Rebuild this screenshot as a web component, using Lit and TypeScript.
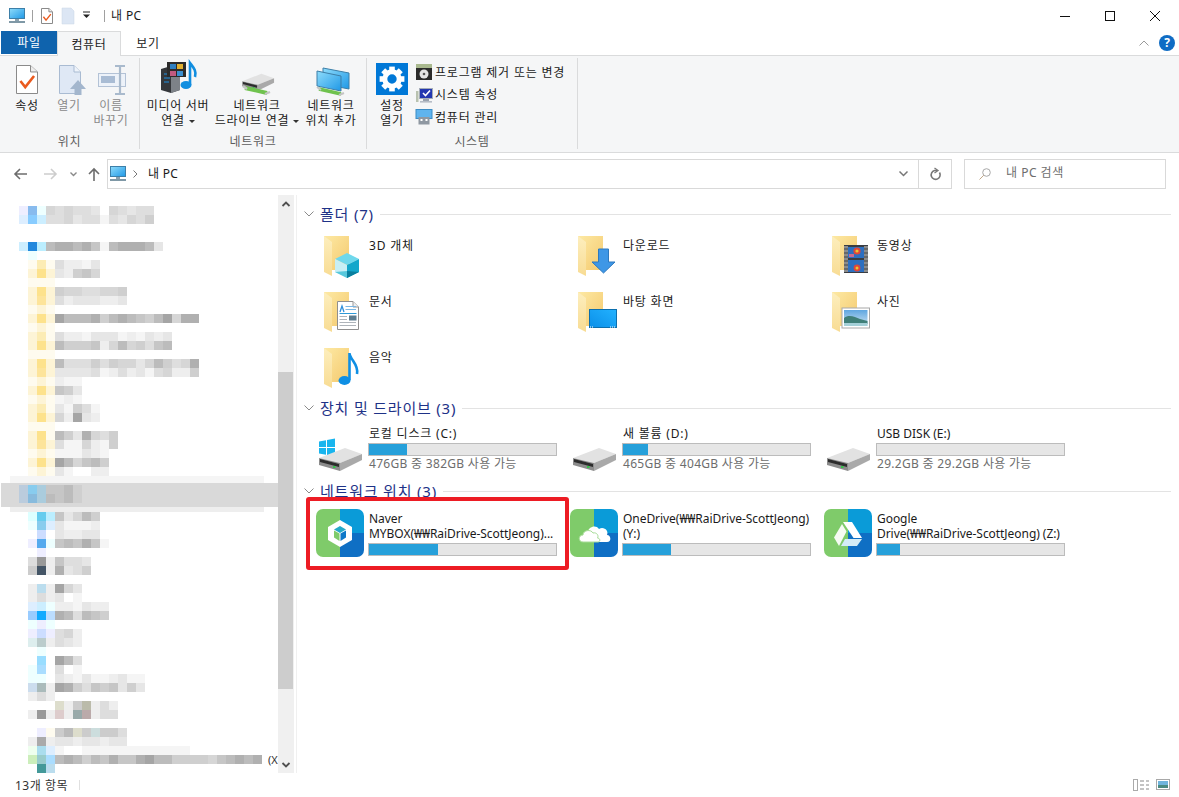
import { LitElement, html, css, svg } from 'lit';
import { customElement } from 'lit/decorators.js';

const ico = (w: number, h: number, body: unknown) => html`
  <svg class="ico" width=${w} height=${h} viewBox="0 0 ${w} ${h}">${body}</svg>
`;

// small shared shapes
const folder = svg`
  <defs>
    <linearGradient id="fb" x1="0" y1="0" x2="1" y2="1"><stop offset="0" stop-color="#fde9a4"/><stop offset="1" stop-color="#f4c96e"/></linearGradient>
    <linearGradient id="ff" x1="0" y1="0" x2="0" y2="1"><stop offset="0" stop-color="#fdeebd"/><stop offset="1" stop-color="#f8dc94"/></linearGradient>
  </defs>
  <polygon points="8,0 33,0 33,34 16,34 8,20" fill="url(#fb)"/>
  <polygon points="8,0 16,6 16,40 8,36" fill="url(#ff)"/>
`;

const hdd = svg`
  <polygon points="3,34 29,24 46,30 24,39" fill="#e2e2e2"/>
  <polygon points="24,39 46,30 46,36 24,47" fill="#a9a9a9"/>
  <polygon points="3,34 24,39 24,47 3,41" fill="#8c8c8c"/>
  <polygon points="4,35 23,40 23,43 4,38" fill="#2c2c2c"/>
  <rect x="17" y="42" width="2.5" height="2" fill="#35c24a"/>
`;

const screenTile = (x: number, y: number, w: number, h: number) => svg`
  <rect x=${x} y=${y} width=${w} height=${h} fill="url(#scr)" stroke="#3d7fa8" stroke-width="1"/>
`;
const scrDefs = svg`
  <defs><linearGradient id="scr" x1="0" y1="0" x2="1" y2="1"><stop offset="0" stop-color="#8fdcfb"/><stop offset="1" stop-color="#1f98e6"/></linearGradient></defs>
`;

const computer = ico(18, 16, svg`
  ${scrDefs}
  ${screenTile(1.5, 0.5, 15, 10)}
  <rect x="7" y="11" width="4" height="2" fill="#8aa0ad"/>
  <rect x="1" y="13" width="16" height="2" fill="#7f98a6"/>
`);

const pageCheck = (w: number, h: number, sw: number) => ico(w, h, svg`
  <path d="M.5 .5H${w * 0.66}L${w - 0.5} ${h * 0.24}V${h - 0.5}H.5Z" fill="#fff" stroke="#8a8a8a"/>
  <path d="M${w * 0.66} .5V${h * 0.24}H${w - 0.5}" fill="#eee" stroke="#8a8a8a"/>
  <path d="M${w * 0.2} ${h * 0.55}L${w * 0.42} ${h * 0.76}L${w * 0.82} ${h * 0.38}" fill="none" stroke="#ea5a1e" stroke-width=${sw}/>
`);

const openIcon = ico(32, 32, svg`
  <g transform="translate(4,0)">
    <path d="M2.5 1.5H17L23.5 8V29.5H2.5Z" fill="#dfe8f5" stroke="#a9bbd2"/>
    <path d="M17 1.5V8H23.5" fill="#eef3fa" stroke="#a9bbd2"/>
    <path d="M21 16L29 25H24.5V31H17.5V25H13Z" fill="#a3b6cd"/>
  </g>
`);

const renameIcon = ico(32, 32, svg`
  <rect x="3.5" y="9.5" width="27" height="13" fill="#edf2f9" stroke="#b3c2d6"/>
  <rect x="6" y="12" width="14" height="7" fill="#a9bcd4"/>
  <path d="M20 2H30M20 30H30M25 2V30" fill="none" stroke="#a9bacd" stroke-width="2.2"/>
`);

const greenBar = svg`
  <path d="M8 24L30 29" stroke="#6fc24e" stroke-width="4"/>
  <path d="M6 22L10 25M28 30L33 28" stroke="#c4c4c4" stroke-width="2.4"/>
`;

const mediaIcon = ico(40, 32, svg`
  <polygon points="3,5 13,2 22,5 22,26 13,29 3,26" fill="#34373b"/>
  <polygon points="13,5 22,5 22,26 13,29" fill="#7d8288"/>
  <path d="M6 10H12M6 14H12M6 18H11" stroke="#1f8fe0" stroke-width="1.2"/>
  <rect x="9" y="-2" width="19" height="15" fill="#2b2b2b"/>
  <rect x="12" y="0" width="6" height="5" fill="#2f7fc0"/>
  <rect x="19" y="0" width="6" height="5" fill="#e0b030"/>
  <rect x="12" y="7" width="6" height="5" fill="#c05a80"/>
  <rect x="19" y="7" width="6" height="5" fill="#3a8fd0"/>
  <ellipse cx="28" cy="21" rx="5.5" ry="4" fill="#118ee0"/>
  <path d="M32 21V-1C35 3 39 7 37 13" fill="none" stroke="#118ee0" stroke-width="2.6"/>
`);

const driveIcon = ico(40, 32, svg`
  <g transform="translate(3,-8) scale(.74)">${hdd}</g>
  ${greenBar}
`);

const netIcon = ico(40, 32, svg`
  ${scrDefs}
  <polygon points="12,4 38,9 38,25 12,20" fill="url(#scr)" stroke="#3d7fa8"/>
  <polygon points="6,7 30,12 30,27 6,22" fill="url(#scr)" stroke="#3d7fa8"/>
  <path d="M8 25L30 30" stroke="#6fc24e" stroke-width="3.5"/>
  <path d="M6 23L10 26M28 31L33 29" stroke="#c4c4c4" stroke-width="2"/>
`);

const gearIcon = ico(32, 32, svg`
  <rect width="32" height="32" fill="#0078d7"/>
  <circle cx="16" cy="16" r="7.2" fill="none" stroke="#fff" stroke-width="5"/>
  ${[0, 45, 90, 135, 180, 225, 270, 315].map(a => svg`
    <rect x="13.2" y="3.6" width="5.6" height="5" fill="#fff" transform="rotate(${a} 16 16)"/>
  `)}
`);

const discIcon = ico(18, 18, svg`
  <rect x="1" y="1" width="16" height="5" fill="#a9b98f"/>
  <rect x="1" y="5" width="16" height="12" fill="#2b2b2b"/>
  <circle cx="9" cy="11" r="4.5" fill="#e4e4e4"/>
  <circle cx="9" cy="11" r="1.3" fill="#555"/>
`);

const sysIcon = ico(18, 18, svg`
  <rect x="1" y="5" width="2.5" height="11" fill="#b9c2b0"/>
  <rect x="4.5" y="2.5" width="13" height="10" fill="#2338b0" stroke="#a4acb8"/>
  <path d="M8 7L10.5 9.5L15 4.5" fill="none" stroke="#fff" stroke-width="1.6"/>
  <rect x="8" y="13" width="6" height="2" fill="#9aa2ae"/>
  <rect x="5" y="15" width="12" height="1.6" fill="#b6bcc6"/>
`);

const mgmtIcon = ico(18, 18, svg`
  <rect x="1" y="1.5" width="16" height="9" fill="#5fb4ee" stroke="#3d8cc4"/>
  <rect x="3.5" y="9" width="11" height="7.5" fill="#8f98a2"/>
  <rect x="5.5" y="11" width="2" height="2" fill="#fff"/>
  <rect x="10.5" y="11" width="2" height="2" fill="#fff"/>
`);

const cube = svg`
  <polygon points="31,17 43,23 31,29 19,23" fill="#6fd8ec"/>
  <polygon points="19,23 31,29 31,42 19,36" fill="#c8eff5"/>
  <polygon points="31,29 43,23 43,36 31,42" fill="#14a7cb"/>
  <polygon points="31,35 43,36 31,42" fill="#0a7f9e"/>
  <polygon points="19,36 31,35 31,42" fill="#58c8dc"/>
`;
const downArrow = svg`
  <path d="M28.5 13H38.5V26H45L33.5 37L22 26H28.5Z" fill="#3e97e6" stroke="#2d79bf"/>
`;
const desktopTile = svg`
  <defs><linearGradient id="dt" x1="0" y1="1" x2="1" y2="0"><stop offset="0" stop-color="#0b8fe8"/><stop offset="1" stop-color="#22b2ff"/></linearGradient></defs>
  <rect x="19.5" y="17.5" width="27" height="18" fill="url(#dt)" stroke="#0b6fae"/>
  <path d="M20 35H23M40 35H46" stroke="#fff" stroke-dasharray="1 1"/>
`;
const docPage = svg`
  <path d="M21.5 9.5H37L42.5 15V37.5H21.5Z" fill="#fff" stroke="#8f8f8f"/>
  <path d="M37 9.5V15H42.5" fill="#eee" stroke="#9a9a9a"/>
  <path d="M24 20L26 14L28 20" fill="none" stroke="#2e8fdc" stroke-width="1.3"/>
  <path d="M29.5 14.5H40M29.5 17.5H40" stroke="#79b6e4"/>
  <path d="M23.5 21.5H40.5" stroke="#2e9ad8"/>
  <path d="M23.5 24.5H31M23.5 27.5H31M23.5 30.5H40M23.5 33.5H40" stroke="#aeb4ba"/>
  <rect x="33" y="23.5" width="7.5" height="5" fill="#5d7c8f"/>
`;
const noteIcon = svg`
  <ellipse cx="28.5" cy="32.5" rx="6" ry="4.4" fill="#0f8fe4"/>
  <path d="M33.5 32V5C34 12 43 16 41 26" fill="none" stroke="#0f8fe4" stroke-width="2.6"/>
`;
const filmStrip = svg`
  <rect x="20" y="9" width="24" height="28" fill="#3a3d42"/>
  <rect x="20" y="10" width="4" height="26" fill="#8c8c8c"/>
  <rect x="40" y="10" width="4" height="26" fill="#8c8c8c"/>
  <path d="M20 13H24M20 17H24M20 21H24M20 25H24M20 29H24M20 33H24M40 13H44M40 17H44M40 21H44M40 25H44M40 29H44M40 33H44" stroke="#444" stroke-width="1"/>
  <rect x="24" y="11" width="16" height="11" fill="#2d6fc0"/>
  <rect x="24" y="24" width="16" height="12" fill="#2d6fc0"/>
  <circle cx="33" cy="15" r="3.6" fill="#e0463a"/>
  <circle cx="33" cy="15" r="1.6" fill="#eac630"/>
  <circle cx="33" cy="32" r="3.4" fill="#e0463a"/>
  <circle cx="33" cy="32" r="1.5" fill="#eac630"/>
  <rect x="25" y="18" width="5" height="3" fill="#c86a92"/>
`;
const photoTile = svg`
  <defs><linearGradient id="sky" x1="0" y1="0" x2="0" y2="1"><stop offset="0" stop-color="#5fa6e0"/><stop offset="1" stop-color="#cfe4f2"/></linearGradient></defs>
  <rect x="18" y="16" width="27.5" height="20" fill="#fff" stroke="#a8a8a8"/>
  <rect x="20" y="18" width="23.5" height="16" fill="url(#sky)"/>
  <path d="M20 26C25 22 31 25 36 27L43.5 29V32H20Z" fill="#3f7f78"/>
  <rect x="20" y="31" width="23.5" height="3" fill="#a4d0d8"/>
`;

const tile = (logo: unknown) => ico(48, 48, svg`
  <defs><clipPath id="tc"><rect width="48" height="48" rx="7"/></clipPath></defs>
  <g clip-path="url(#tc)">
    <rect width="24" height="48" fill="#7fcb6a"/>
    <rect x="24" width="24" height="24" fill="#0a9bd8"/>
    <rect x="24" y="24" width="24" height="24" fill="#0f6fc4"/>
  </g>
  ${logo}
`);

const naverLogo = svg`
  <polygon points="24,11 36,18 36,31 24,38 12,31 12,18" fill="#fff"/>
  <polygon points="24,17 30,20.5 24,24 18,20.5" fill="#25a9c8"/>
  <polygon points="18,21.5 23.5,24.5 23.5,32 18,28.5" fill="#7fcb6a"/>
  <polygon points="30,21.5 24.5,24.5 24.5,32 30,28.5" fill="#0f78c8"/>
`;
const cloudLogo = svg`
  <path d="M18 23C18 18 26 15 29 20C34 17 39 22 37 26C41 26 42 33 37 33H18Z" fill="#fff"/>
  <path d="M13 33C8 33 8 26 13 26C13 21 21 20 23 24C27 23 29 27 27.5 29C30.5 29 30.5 33 28 33Z" fill="#fff" stroke="#a6dc96"/>
`;
const gdriveLogo = svg`
  <polygon points="19,13 28,13 38,29 29.5,29" fill="#fff"/>
  <polygon points="18,15 22.5,22.5 15,37 10,28.5" fill="#fff" opacity=".92"/>
  <polygon points="21,30 38,30 33,37 17,37" fill="#d4ecf6"/>
`;

const chevronDown = ico(10, 8, svg`<path d="M.5 1.5L5 6L9.5 1.5" fill="none" stroke="#8a8a8a"/>`);

const win = svg`
  <g fill="#19b5ee">
    <polygon points="3,17.5 10,16.2 10,23 3,23"/>
    <polygon points="11,16 19,14.6 19,23 11,23"/>
    <polygon points="3,24 10,24 10,30.8 3,29.6"/>
    <polygon points="11,24 19,24 19,32 11,31"/>
  </g>
`;

type Row = string;
// blurred tree: one row is one band of 9px cells. "-" empty, digit a grey step, 3 letters a colour
const GREYS = ['f5f5f5', 'eeeeee', 'e6e6e6', 'dedede', 'd6d6d6', 'cfcfcf', 'c6c6c6', 'bcbcbc', 'b0b0b0', 'a5a5a5'];
const YELLOWS: Record<string, string> = { fec: 'fdf4d6', fd7: 'fde28c', fd8: 'fde49a', fe9: 'fcecb4', ffe: 'fefbef' };
const TREE: Row[] = [
  'eef 8be eff 4 3 4 3 3 2 - 4 3 2 3 3',
  'def 8cf cef 3 3 4 2 3 3 0 3 2 4 3 5',
  '-',
  '- - -',
  'cef 28d bef 7 8 8 7 8 6 0 7 8 8 8 7 2',
  '- eff',
  '- ffe fe9 ffe 3 1 1 0 2',
  '- fec fd7 fec 2 1 5 6 4',
  '- ffe ffe ffe',
  '- fec fd7 fec 5 4 4 3 3 4 4 5',
  '- fec fd8 fec 3 1 2 2 2 1 1 2',
  '- ffe fec ffe',
  '- fec fd7 fec 9 7 7 7 8 5 7 8 7 6 5 7 9 4 8 8',
  '- ffe fec ffe',
  '- fec fe9 ffe 3 1 1 0 2 2 2 0 1 0 2 1 2',
  '- fec fd7 fec 7 5 5 5 6 1 4 7 4 5 3 6 7',
  '- ffe ffe ffe',
  '- fec fd7 fec 7 3 3 3 5 3 5 4 4 2 4 7 5 3 4 8',
  '- fec fd8 fec 2 2 2 2 3 0 1 3 1 2 0 3 4 1 1 5',
  '- ffe fec ffe 1 0 0',
  '- fec fd7 fec 6 5 2',
  '- ffe fec ffe 0 1 0',
  '- fec fe9 ffe 2 0 5 3 0',
  '- fec fd7 fec 4 1 9 2 1',
  '- ffe ffe ffe',
  '- fec fd7 ffe 7 5 2 8 4 3 5',
  '- fec fd8 fec 3 0 0 4 1 0 5',
  '- ffe fec ffe 0 0 0 2 1 0',
  '- fec fd7 fec 9 7 4 6 7 5',
  '- ffe fec ffe 2 0 - - 1 1',
  '',
  'bcd 8ce acd 6 6 7 5',
  'bcd 8bd acd 7 6 7 5',
  '',
  '- dff 6ce bef 6 2 4 7 5',
  '- eff 8ce def 2 0 0 0 1',
  '- - cdf - 2 1 1 2 2',
  '- eef 5ae eff 6 7 6 8 6 0',
  '- - eef',
  '- ddd 999 eee 6 3 3 2',
  '- ccc 456 eee 8 2 3 5',
  '- - - -',
  '- eee bde eee 9 4 2',
  '- eee ddd eee 2 - 0',
  '- def cef eff 1 1 0 2 1 1',
  '- 9cf 1af bdf 8 7 3 7 6 5',
  '- eff eef eff',
  '- eef cdf eef 3 4 1',
  '- dee bcc eee 3 2 1',
  '- - eff',
  '- - 9df - 9 7 3',
  '- eff adf - 3 - 0',
  '- eff eff - 2 1 0 2 0 0 1 2 0 0',
  '- cde abb eee 9 8 5 3 6 5 6 2 5 2',
  '- eee ddd eee',
  '- - - - ddc eee ccc bba eee ddd eee',
  '- eee 999 eee dcc eee 9aa baa eee ddd ddd',
  '-',
  '- fff eef ffe ccc bbb ddc ccc cdd ccc ccc ddd',
  '- eee aaa eee 2 2 1 2 2 1 2 2',
  '- efe ade def 0 - - 0 0 0 0 0 0 0 0 0 0 0 0',
  '- ceb 9cc adf 7 8 7 5 7 6 8 6 6 8 9 7 7 5 5 5 5 4 6 7 8 7 8',
  '- - 499 bde',
];

const cellColor = (t: string) => {
  if (t === '-') return 'transparent';
  if (t.length === 1) return `#${GREYS[+t]}`;
  return `#${YELLOWS[t] ?? t}`;
};

@customElement('app-root')
export class AppRoot extends LitElement {
  static styles = css`
    :host {
      display: flex;
      flex-direction: column;
      width: 1179px;
      height: 797px;
      background: #fff;
      overflow: hidden;
      font-family: "Noto Sans", "Noto Sans CJK KR", sans-serif;
      font-size: 12px;
      line-height: 15px;
      color: #1a1a1a;
    }
    .ico { display: block; flex: none; overflow: visible; }
    .ko { letter-spacing: 0.8px; }

    .titlebar { display: flex; align-items: center; height: 31px; padding-left: 8px; }
    .qsep { width: 1px; height: 12px; background: #a0a0a0; margin: 0 8px 0 6px; }
    .qsep.last { margin-right: 6px; }
    .qdoc { margin-right: 9px; }
    .qdrop { margin: 0 8px 0 0; }
    .title { letter-spacing: 0.4px; }
    .winbtns { display: flex; margin-left: auto; padding-right: 19px; gap: 35px; }

    .tabs { display: flex; height: 25px; border-bottom: 1px solid #dadbdc; box-sizing: border-box; padding-left: 1px; align-items: flex-start; }
    .tab { display: flex; align-items: center; justify-content: center; height: 24px; letter-spacing: 0.7px; }
    .tab.file { width: 56px; height: 23px; background: #0f63ad; color: #fff; }
    .tab.on { width: 64px; height: 25px; background: #f5f6f7; border: 1px solid #dadbdc; border-bottom: none; box-sizing: border-box; }
    .tab.view { width: 54px; }
    .helpers { display: flex; align-items: center; margin-left: auto; padding-right: 4px; gap: 10px; height: 24px; }
    .help { width: 16px; height: 16px; border-radius: 50%; background: #0f6cc4; color: #fff; font-weight: 700; font-size: 12px; line-height: 16px; text-align: center; }

    .ribbon { display: flex; height: 97px; box-sizing: border-box; padding-top: 2px; background: #f5f6f7; border-bottom: 1px solid #dadbdc; }
    .group { display: flex; flex-direction: column; height: 91px; box-sizing: border-box; border-right: 1px solid #dadbdc; }
    .g1 { width: 140px; }
    .g2 { width: 227px; }
    .g3 { width: 211px; }
    .gbody { display: flex; flex: 1; }
    .g1 .gbody { padding-left: 6px; }
    .g2 .gbody { padding-left: 6px; }
    .g3 .gbody { padding-left: 9px; }
    .glabel { height: 18px; box-sizing: border-box; padding-top: 2px; line-height: 18px; text-align: center; color: #5c5c5c; letter-spacing: 0.7px; }
    .rbtn { display: flex; flex-direction: column; align-items: center; padding-top: 6px; text-align: center; white-space: nowrap; }
    .slot { display: flex; align-items: flex-start; justify-content: center; height: 32px; padding-top: 1px; box-sizing: border-box; }
    .rbtn .lbl { margin-top: 2px; letter-spacing: 0.7px; }
    .rbtn.dim { color: #8a8a8a; }
    .w42 { width: 42px; }
    .w64 { width: 64px; }
    .w94 { width: 94px; }
    .w54 { width: 54px; }
    .w32 { width: 32px; padding-top: 5px; }
    .w32 .lbl { margin-top: 3px; }
    .caret { display: inline-block; border: 3px solid transparent; border-top: 3px solid #333; border-bottom: none; margin-left: 4px; vertical-align: 2px; }
    .tool-list { margin-left: 7px; padding-top: 3px; }
    .tool { display: flex; align-items: center; gap: 2px; height: 22.5px; white-space: nowrap; letter-spacing: 0.8px; }

    .addr { display: flex; align-items: center; height: 42px; }
    .nav { display: flex; align-items: center; width: 107px; box-sizing: border-box; padding-left: 14px; }
    .nav .b1 { margin-right: 17px; }
    .nav .b2 { margin-right: 13px; }
    .nav .b3 { margin-right: 11px; }
    .addrbox { display: flex; align-items: center; width: 845px; height: 30px; box-sizing: border-box; border: 1px solid #d9d9d9; padding-left: 1px; }
    .crumb-sep { margin: 0 10px 0 6px; }
    .crumb { margin-bottom: 2px; letter-spacing: 0.3px; }
    .addrend { display: flex; align-items: center; margin-left: auto; height: 100%; }
    .addrend .drop { margin-right: 10px; }
    .refresh { display: flex; align-items: center; justify-content: center; width: 33px; height: 100%; border-left: 1px solid #d9d9d9; box-sizing: border-box; }
    .search { display: flex; align-items: center; width: 202px; height: 30px; margin-left: 12px; padding-left: 14px; gap: 15px; box-sizing: border-box; border: 1px solid #d9d9d9; color: #6d6d6d; }
    .search span { margin-bottom: 3px; letter-spacing: 0.5px; }

    .body { display: flex; flex: 1; min-height: 0; }
    .tree { width: 278px; flex: none; overflow: hidden; box-sizing: border-box; padding-top: 11px; }
    .row { display: flex; height: 9px; padding-left: 19px; white-space: nowrap; }
    .cell { width: 9px; height: 9px; flex: none; }
    .row.halo-top { height: 7px; margin: 0 14px 0 10px; padding: 0; background: #f5f5f5; }
    .row.sel { background: #d9d9d9; margin-left: 1px; padding-left: 18px; }
    .row.sel.first { padding-top: 2px; }
    .row.sel.last { padding-bottom: 4px; }
    .row.halo-bottom { height: 5px; margin: 0 14px 0 10px; padding: 0; background: #eeeeee; }
    .cut { margin-left: 6px; line-height: 9px; font-size: 11px; color: #333; }

    .scroll { display: flex; flex-direction: column; width: 16px; flex: none; background: #f0f0f0; }
    .arrow { display: flex; align-items: center; justify-content: center; height: 17px; flex: none; }
    .arrow.end { margin-top: auto; }
    .thumb-gap { height: 160px; flex: none; }
    .thumb { width: 15px; height: 317px; flex: none; background: #cdcdcd; }
    .pane-edge { width: 1px; margin-left: 2px; background: #f0f0f0; flex: none; }

    .main { flex: 1; padding: 9px 8px 0 7px; min-width: 0; }
    .head { display: flex; align-items: center; height: 20px; gap: 6px; font-size: 15px; letter-spacing: 0.8px; color: #1e3287; white-space: nowrap; }
    .head .rule { flex: 1; height: 1px; background: #e3e3e3; }
    .grid { display: grid; grid-template-columns: repeat(3, 254px); margin-left: 12px; }
    .folders { margin-top: 12px; row-gap: 6px; }
    .drives { margin-top: 6px; margin-bottom: 7px; }
    .nets { margin-top: 8px; }
    .item { display: flex; gap: 4px; height: 50px; position: relative; white-space: nowrap; }
    .item .name { padding-top: 2px; padding-left: 1px; }
    .nets .name { letter-spacing: -0.05px; }
    .bar { width: 189px; height: 13px; margin-top: 2px; box-sizing: border-box; border: 1px solid #bcbcbc; background: #e6e6e6; }
    .nets .bar { margin-top: 1.5px; }
    .fill { height: 100%; background: #26a0da; }
    .free { color: #6d6d6d; padding-left: 1px; letter-spacing: 0.3px; }
    .mark { position: absolute; left: -10px; top: -12px; width: 263px; height: 73px; box-sizing: border-box; border: 4px solid #ed1c24; border-radius: 3px; }

    .status { display: flex; align-items: center; height: 24px; padding-left: 15px; color: #333; letter-spacing: 0.5px; }
    .status .vsep { width: 1px; height: 10px; background: #e0e0e0; margin-left: 11px; }
    .views { display: flex; gap: 7px; margin-left: auto; padding-right: 9px; }
  `;

  renderTree() {
    return TREE.map((r, i) => {
      const cls = i === 30 ? 'halo-top' : i === 31 ? 'sel first' : i === 32 ? 'sel last' : i === 33 ? 'halo-bottom' : '';
      const cells = r ? r.split(' ') : [];
      return html`<div class="row ${cls}">
        ${cells.map(t => html`<span class="cell" style="background:${cellColor(t)}"></span>`)}
        ${i === 61 ? html`<span class="cut">(X</span>` : ''}
      </div>`;
    });
  }

  folderItem(name: string, overlay: unknown) {
    return html`<div class="item">
      ${ico(48, 48, svg`${folder}${overlay}`)}
      <div class="name ko">${name}</div>
    </div>`;
  }

  driveItem(name: string, pct: number, free: string, logo: unknown, nameClass = 'ko') {
    return html`<div class="item">
      ${ico(48, 48, svg`${logo}${hdd}`)}
      <div>
        <div class="name ${nameClass}">${name}</div>
        <div class="bar"><div class="fill" style="width:${pct}px"></div></div>
        <div class="free">${free}</div>
      </div>
    </div>`;
  }

  netItem(l1: string, l2: string, pct: number, logo: unknown, marked = false) {
    return html`<div class="item">
      ${tile(logo)}
      <div>
        <div class="name">${l1}<br />${l2}</div>
        <div class="bar"><div class="fill" style="width:${pct}px"></div></div>
      </div>
      ${marked ? html`<div class="mark"></div>` : ''}
    </div>`;
  }

  render() {
    return html`
      <div class="titlebar">
        ${computer}
        <span class="qsep"></span>
        <span class="qdoc">${pageCheck(12, 16, 1.4)}</span>
        <span class="qdoc">${ico(12, 16, svg`<path d="M0 0H9L12 3V16H0Z" fill="#dce6f4" stroke="#c8d4e4" stroke-width=".5"/>`)}</span>
        <span class="qdrop">${ico(7, 7, svg`<path d="M0 0H7" stroke="#222"/><path d="M0 2.5H7L3.5 6Z" fill="#222"/>`)}</span>
        <span class="qsep last"></span>
        <span class="title">내 PC</span>
        <div class="winbtns">
          ${ico(10, 10, svg`<path d="M0 5.5H10" stroke="#111"/>`)}
          ${ico(10, 10, svg`<rect x=".5" y=".5" width="9" height="9" fill="none" stroke="#111"/>`)}
          ${ico(10, 10, svg`<path d="M0 0L10 10M10 0L0 10" stroke="#111"/>`)}
        </div>
      </div>

      <div class="tabs">
        <div class="tab file">파일</div>
        <div class="tab on">컴퓨터</div>
        <div class="tab view">보기</div>
        <div class="helpers">
          ${ico(10, 6, svg`<path d="M.5 5.5L5 1L9.5 5.5" fill="none" stroke="#9a9a9a"/>`)}
          <div class="help">?</div>
        </div>
      </div>

      <div class="ribbon">
        <div class="group g1">
          <div class="gbody">
            <div class="rbtn w42"><div class="slot">${pageCheck(22, 29, 2.6)}</div><div class="lbl">속성</div></div>
            <div class="rbtn w42 dim">${openIcon}<div class="lbl">열기</div></div>
            <div class="rbtn w42 dim">${renameIcon}<div class="lbl">이름<br />바꾸기</div></div>
          </div>
          <div class="glabel">위치</div>
        </div>
        <div class="group g2">
          <div class="gbody">
            <div class="rbtn w64">${mediaIcon}<div class="lbl">미디어 서버<br />연결<span class="caret"></span></div></div>
            <div class="rbtn w94">${driveIcon}<div class="lbl">네트워크<br />드라이브 연결<span class="caret"></span></div></div>
            <div class="rbtn w54">${netIcon}<div class="lbl">네트워크<br />위치 추가</div></div>
          </div>
          <div class="glabel">네트워크</div>
        </div>
        <div class="group g3">
          <div class="gbody">
            <div class="rbtn w32">${gearIcon}<div class="lbl">설정<br />열기</div></div>
            <div class="tool-list">
              <div class="tool">${discIcon}프로그램 제거 또는 변경</div>
              <div class="tool">${sysIcon}시스템 속성</div>
              <div class="tool">${mgmtIcon}컴퓨터 관리</div>
            </div>
          </div>
          <div class="glabel">시스템</div>
        </div>
      </div>

      <div class="addr">
        <div class="nav">
          <span class="b1">${ico(13, 12, svg`<path d="M6 1L1 6L6 11M1 6H13" fill="none" stroke="#6d6d6d" stroke-width="1.6"/>`)}</span>
          <span class="b2">${ico(13, 12, svg`<path d="M7 1L12 6L7 11M0 6H12" fill="none" stroke="#cdcdcd" stroke-width="1.6"/>`)}</span>
          <span class="b3">${ico(7, 5, svg`<path d="M.5 .5L3.5 3.5L6.5 .5" fill="none" stroke="#8a8a8a" stroke-width="1.4"/>`)}</span>
          ${ico(12, 13, svg`<path d="M1 6L6 1L11 6M6 1V13" fill="none" stroke="#6d6d6d" stroke-width="1.6"/>`)}
        </div>
        <div class="addrbox">
          ${computer}
          <span class="crumb-sep">${ico(5, 8, svg`<path d="M.5 .5L4 4L.5 7.5" fill="none" stroke="#777"/>`)}</span>
          <span class="crumb">내 PC</span>
          <div class="addrend">
            <span class="drop">${ico(9, 6, svg`<path d="M.5 .5L4.5 4.5L8.5 .5" fill="none" stroke="#777" stroke-width="1.5"/>`)}</span>
            <div class="refresh">${ico(11, 12, svg`<path d="M9.5 4.5A4.5 4.5 0 1 1 4.5 2.5H7" fill="none" stroke="#777" stroke-width="1.6"/><path d="M4.5 0L8 2.5L4.5 5" fill="none" stroke="#777" stroke-width="1.3"/>`)}</div>
          </div>
        </div>
        <div class="search">
          ${ico(12, 12, svg`<circle cx="7.5" cy="4.5" r="3.8" fill="none" stroke="#a8a8a8"/><path d="M4.8 7.2L.5 11.5" stroke="#c2a888"/>`)}
          <span>내 PC 검색</span>
        </div>
      </div>

      <div class="body">
        <div class="tree">${this.renderTree()}</div>
        <div class="scroll">
          <div class="arrow">${ico(8, 6, svg`<path d="M.5 5L4 1.5L7.5 5" fill="none" stroke="#505050" stroke-width="1.8"/>`)}</div>
          <div class="thumb-gap"></div>
          <div class="thumb"></div>
          <div class="arrow end">${ico(8, 6, svg`<path d="M.5 1L4 4.5L7.5 1" fill="none" stroke="#505050" stroke-width="1.8"/>`)}</div>
        </div>
        <div class="pane-edge"></div>
        <div class="main">
          <div class="head">${chevronDown}<span>폴더 (7)</span><div class="rule"></div></div>
          <div class="grid folders">
            ${this.folderItem('3D 개체', cube)}
            ${this.folderItem('다운로드', downArrow)}
            ${this.folderItem('동영상', filmStrip)}
            ${this.folderItem('문서', docPage)}
            ${this.folderItem('바탕 화면', desktopTile)}
            ${this.folderItem('사진', photoTile)}
            ${this.folderItem('음악', noteIcon)}
          </div>
          <div class="head">${chevronDown}<span>장치 및 드라이브 (3)</span><div class="rule"></div></div>
          <div class="grid drives">
            ${this.driveItem('로컬 디스크 (C:)', 38, '476GB 중 382GB 사용 가능', win)}
            ${this.driveItem('새 볼륨 (D:)', 25, '465GB 중 404GB 사용 가능', '')}
            ${this.driveItem('USB DISK (E:)', 0, '29.2GB 중 29.2GB 사용 가능', '', '')}
          </div>
          <div class="head">${chevronDown}<span>네트워크 위치 (3)</span><div class="rule"></div></div>
          <div class="grid nets">
            ${this.netItem('Naver', 'MYBOX(₩₩RaiDrive-ScottJeong)...', 69, naverLogo, true)}
            ${this.netItem('OneDrive(₩₩RaiDrive-ScottJeong)', '(Y:)', 48, cloudLogo)}
            ${this.netItem('Google', 'Drive(₩₩RaiDrive-ScottJeong) (Z:)', 23, gdriveLogo)}
          </div>
        </div>
      </div>

      <div class="status">
        13개 항목<span class="vsep"></span>
        <div class="views">
          ${ico(16, 12, svg`<rect x=".5" y=".5" width="4" height="11" fill="none" stroke="#aaa"/><path d="M7 2H11M13 2H16M7 6H11M13 6H16M7 10H11M13 10H16" stroke="#888"/>`)}
          ${ico(14, 11, svg`<rect x=".5" y=".5" width="13" height="10" fill="#fff" stroke="#a8a8a8"/><rect x="2" y="2" width="10" height="7" fill="#6fb4dc"/><rect x="2" y="6" width="10" height="3" fill="#4a8a80"/>`)}
        </div>
      </div>
    `;
  }
}
